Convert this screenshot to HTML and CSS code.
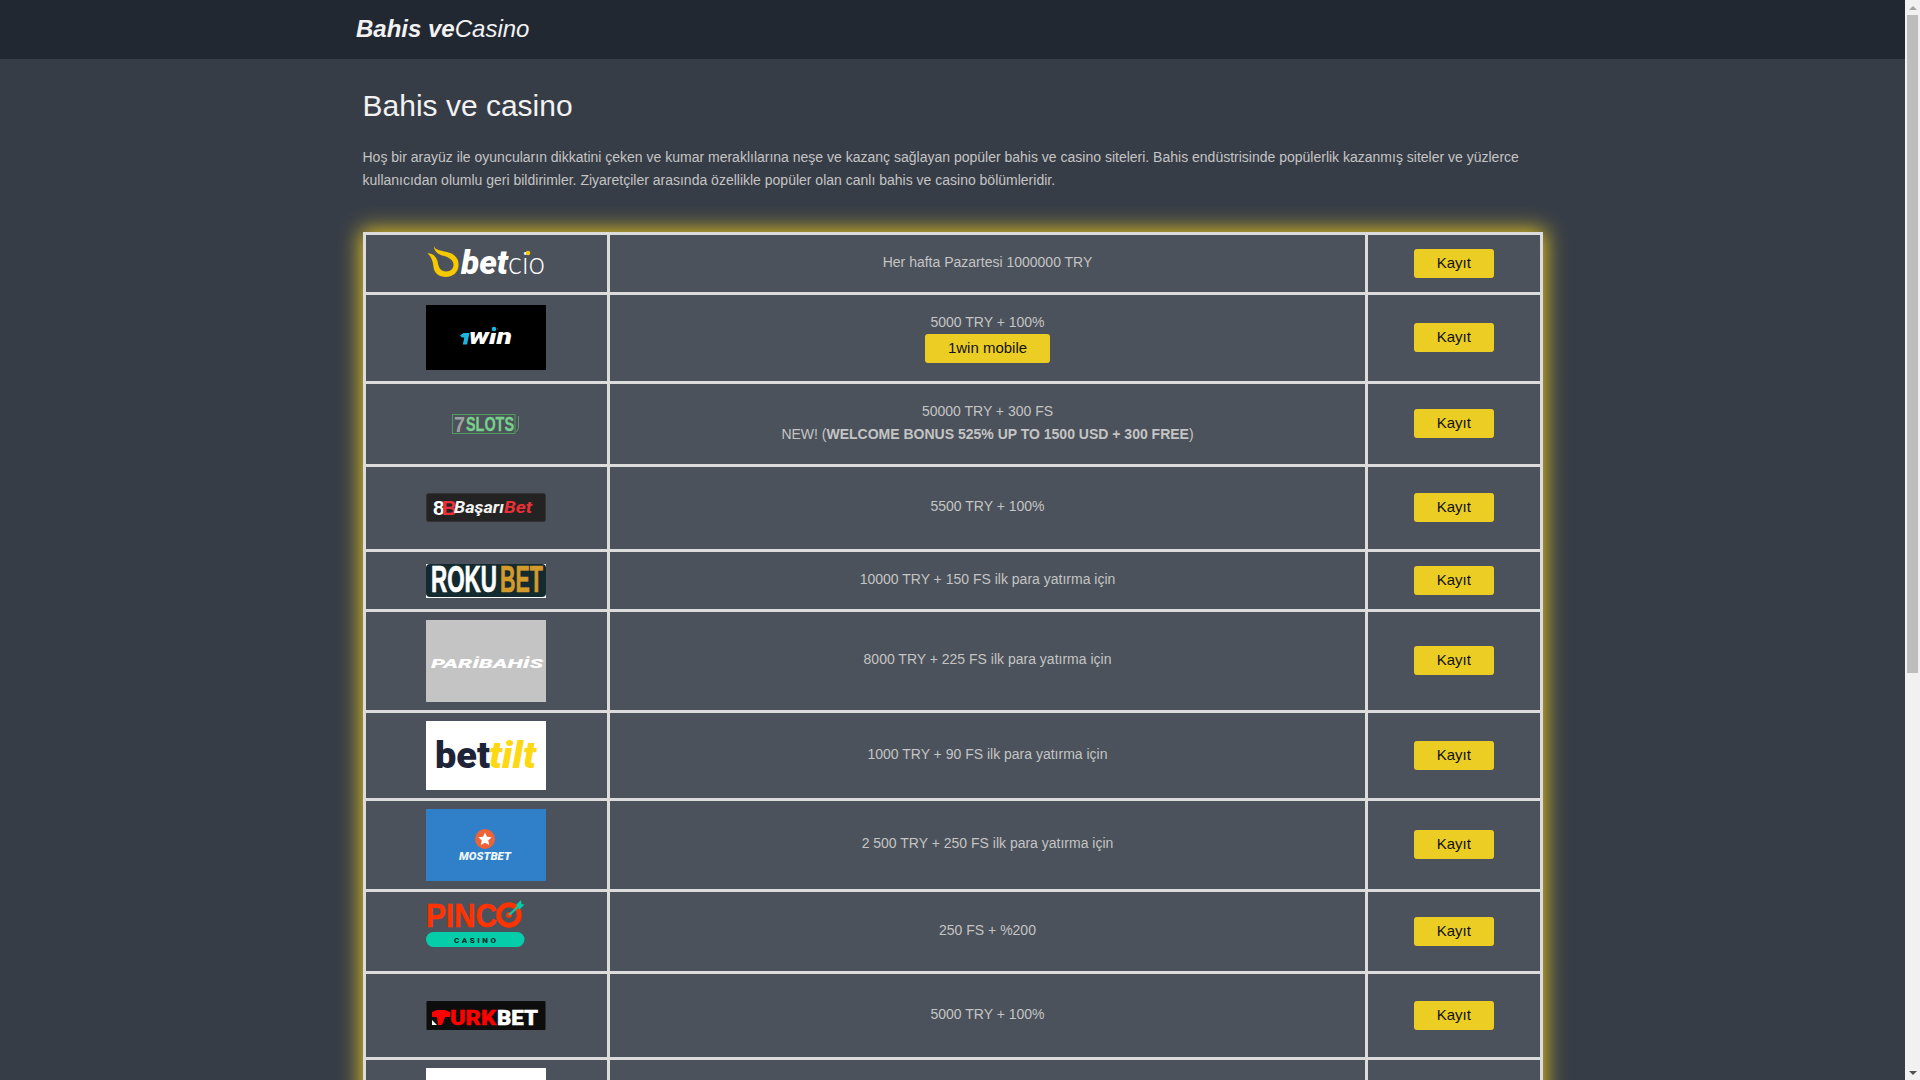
FILE: index.html
```html
<!DOCTYPE html>
<html lang="tr">
<head>
<meta charset="utf-8">
<title>Bahis ve Casino</title>
<link rel="stylesheet" href="styles.css">
</head>
<body>
<header class="topbar">
  <div class="topbar-inner"><a class="brand" href="#"><b>Bahis ve</b>Casino</a></div>
</header>
<main class="content">
  <h1 class="title">Bahis ve casino</h1>
  <p class="intro">Hoş bir arayüz ile oyuncuların dikkatini çeken ve kumar meraklılarına neşe ve kazanç sağlayan popüler bahis ve casino siteleri. Bahis endüstrisinde popülerlik kazanmış siteler ve yüzlerce kullanıcıdan olumlu geri bildirimler. Ziyaretçiler arasında özellikle popüler olan canlı bahis ve casino bölümleridir.</p>
  <table class="offers">
    <colgroup><col class="col-logo"><col class="col-text"><col class="col-action"></colgroup>
    <tbody>
      <tr>
        <td><svg class="logo" width="120" height="41" viewBox="0 0 120 41" role="img" aria-label="betcio">
          <path fill="#f5c800" d="M8 2.7C9 8 16 7 24 10C31 12.500 33 18 32.500 23C32 30 26 34 20 34C13 34 8 30 7.500 24C7 18 5 13 1.300 10.300C6 10 10 13 11.500 18C12.500 25 15 28.500 20 28.500C25 28.500 27.500 25 27.500 22C27.500 17 23 14.500 18 13C12 11.500 7.500 8 8 2.700Z"/>
          <text x="35" y="31" class="l-betcio-b" textLength="47" lengthAdjust="spacingAndGlyphs">bet</text>
          <text x="82" y="31" class="l-betcio-c" textLength="37" lengthAdjust="spacingAndGlyphs">cio</text>
          <circle cx="102" cy="10" r="2.300" fill="#f5c800"/>
        </svg></td>
        <td><p class="bonus">Her hafta Pazartesi 1000000 TRY</p></td>
        <td><a class="btn" href="#">Kayıt</a></td>
      </tr>
      <tr>
        <td><svg class="logo" width="120" height="70" viewBox="0 0 120 70" role="img" aria-label="1win">
          <rect y="2" width="120" height="65" fill="#000"/>
          <path fill="#1bb6dd" d="M34 32.500L37.500 30H43.500L41 41.500H36.800L38.300 34.500H36z"/>
          <text x="43" y="41" class="l-1win" textLength="43" lengthAdjust="spacingAndGlyphs">win</text>
          <rect x="65" y="24" width="6" height="6" fill="#000"/>
          <circle cx="68" cy="26" r="2.300" fill="#1bb6dd"/>
        </svg></td>
        <td><p class="bonus">5000 TRY + 100%</p><a class="btn btn-wide" href="#">1win mobile</a></td>
        <td><a class="btn" href="#">Kayıt</a></td>
      </tr>
      <tr>
        <td><svg class="logo" width="120" height="64" viewBox="0 0 120 64" role="img" aria-label="7slots">
          <rect x="26.500" y="22.500" width="62.500" height="19" fill="none" stroke="#4f9b62"/>
          <text x="28" y="39.500" class="l-7" textLength="11" lengthAdjust="spacingAndGlyphs">7</text>
          <text x="40" y="39" class="l-slots" textLength="48" lengthAdjust="spacingAndGlyphs">SLOTS</text>
          <path d="M92.500 24v12l-2 4" fill="none" stroke="#6b8f73"/>
        </svg></td>
        <td><p class="bonus">50000 TRY + 300 FS<br>NEW! (<b>WELCOME BONUS 525% UP TO 1500 USD + 300 FREE</b>)</p></td>
        <td><a class="btn" href="#">Kayıt</a></td>
      </tr>
      <tr>
        <td><svg class="logo" width="120" height="66" viewBox="0 0 120 66" role="img" aria-label="BaşarıBet">
          <rect x="0.500" y="18.500" width="119" height="28" rx="2" fill="#232323" stroke="#333"/>
          <text x="7" y="39.500" class="l-bb-mark"><tspan class="l-bb-w">8</tspan><tspan class="l-bb-r" dx="-3">B</tspan></text>
          <text x="28" y="38" class="l-bb-t" textLength="50" lengthAdjust="spacingAndGlyphs">Başarı</text>
          <text x="78" y="38" class="l-bb-b" textLength="28" lengthAdjust="spacingAndGlyphs">Bet</text>
        </svg></td>
        <td><p class="bonus">5500 TRY + 100%</p></td>
        <td><a class="btn" href="#">Kayıt</a></td>
      </tr>
      <tr>
        <td><svg class="logo" width="120" height="41" viewBox="0 0 120 41" role="img" aria-label="Rokubet">
          <rect y="4" width="120" height="34" fill="#fff"/>
          <rect y="4" width="120" height="33" rx="4" fill="#132a2f"/>
          <text x="5" y="32" class="l-roku-w" textLength="66" lengthAdjust="spacingAndGlyphs">ROKU</text>
          <text x="74" y="32" class="l-roku-g" textLength="43" lengthAdjust="spacingAndGlyphs">BET</text>
        </svg></td>
        <td><p class="bonus">10000 TRY + 150 FS ilk para yatırma için</p></td>
        <td><a class="btn" href="#">Kayıt</a></td>
      </tr>
      <tr>
        <td><svg class="logo" width="120" height="82" viewBox="0 0 120 82" role="img" aria-label="Paribahis">
          <rect width="120" height="82" fill="#c4c4c4"/>
          <text x="5" y="47.500" class="l-pari" textLength="112" lengthAdjust="spacingAndGlyphs">PARİBAHİS</text>
        </svg></td>
        <td><p class="bonus">8000 TRY + 225 FS ilk para yatırma için</p></td>
        <td><a class="btn" href="#">Kayıt</a></td>
      </tr>
      <tr>
        <td><svg class="logo" width="120" height="69" viewBox="0 0 120 69" role="img" aria-label="bettilt">
          <rect width="120" height="69" fill="#fff"/>
          <text x="9" y="47" class="l-bt-a" textLength="55" lengthAdjust="spacingAndGlyphs">bet</text>
          <text x="63" y="47" class="l-bt-b" textLength="47" lengthAdjust="spacingAndGlyphs">tilt</text>
        </svg></td>
        <td><p class="bonus">1000 TRY + 90 FS ilk para yatırma için</p></td>
        <td><a class="btn" href="#">Kayıt</a></td>
      </tr>
      <tr>
        <td><svg class="logo" width="120" height="72" viewBox="0 0 120 72" role="img" aria-label="Mostbet">
          <rect width="120" height="72" fill="#2f80c8"/>
          <circle cx="59" cy="30" r="10" fill="#ee6238"/>
          <path fill="#fff" d="M59 23.500l2 4.300 4.700.500-3.500 3.200 1 4.600-4.200-2.400-4.200 2.400 1-4.600-3.500-3.200 4.700-.500z"/>
          <text x="33" y="50.500" class="l-most" textLength="52" lengthAdjust="spacingAndGlyphs">MOSTBET</text>
        </svg></td>
        <td><p class="bonus">2 500 TRY + 250 FS ilk para yatırma için</p></td>
        <td><a class="btn" href="#">Kayıt</a></td>
      </tr>
      <tr>
        <td><svg class="logo" width="120" height="63" viewBox="0 0 120 63" role="img" aria-label="Pinco Casino">
          <text x="0" y="27" class="l-pinco" textLength="71" lengthAdjust="spacingAndGlyphs">PINC</text>
          <circle cx="83" cy="15" r="10.300" fill="none" stroke="#ff3300" stroke-width="5"/>
          <circle cx="83" cy="15" r="3" fill="#ff3300"/>
          <path d="M83 15L94 5" stroke="#06cda9" stroke-width="2.200"/>
          <path fill="#06cda9" d="M90 5l5-5 .5 4 3 .5-5 5z"/>
          <rect y="32" width="98.500" height="15" rx="7.500" fill="#06cda9"/>
          <text x="28" y="42.500" class="l-casino" textLength="42">CASINO</text>
        </svg></td>
        <td><p class="bonus">250 FS + %200</p></td>
        <td><a class="btn" href="#">Kayıt</a></td>
      </tr>
      <tr>
        <td><svg class="logo" width="120" height="67" viewBox="0 0 120 67" role="img" aria-label="Turkbet">
          <rect x="0.500" y="19" width="119" height="29" rx="1" fill="#0d0d0d"/>
          <path fill="#f00" d="M6 30l5-2h8l5 2v5h-5l-3 8h-4l-1-8H6z"/>
          <path fill="#fff" d="M6 38l5 5H6z"/>
          <text x="24" y="43" class="l-turk" textLength="46" lengthAdjust="spacingAndGlyphs">URK</text>
          <text x="71" y="43" class="l-bet" textLength="41" lengthAdjust="spacingAndGlyphs">BET</text>
        </svg></td>
        <td><p class="bonus">5000 TRY + 100%</p></td>
        <td><a class="btn" href="#">Kayıt</a></td>
      </tr>
      <tr>
        <td><svg class="logo" width="120" height="66" viewBox="0 0 120 66"><rect width="120" height="66" fill="#fff"/></svg></td>
        <td><p class="bonus">5000 TRY + 100%</p></td>
        <td><a class="btn" href="#">Kayıt</a></td>
      </tr>
    </tbody>
  </table>
</main>
<aside class="fake-scrollbar" aria-hidden="true">
  <span class="sb-arrow"><i class="sb-up"></i></span>
  <span class="sb-track"><i class="sb-thumb"></i></span>
  <span class="sb-arrow"><i class="sb-down"></i></span>
</aside>
</body>
</html>
```
FILE: styles.css
```css
* { box-sizing: border-box; }
html { margin: 0; padding: 0; }
body {
  margin: 0 15px 0 0;
  padding: 0;
  background: #373d47;
  color: #c4c4c4;
  font-family: "Liberation Sans", Arial, sans-serif;
  font-size: 14px;
  line-height: 23px;
}
.topbar { background: #212832; height: 59px; }
.topbar-inner {
  width: 1193px;
  margin: 0 auto;
  height: 59px;
  padding-bottom: 2px;
  display: flex;
  align-items: center;
}
.brand {
  color: #f2f2f2;
  font-size: 24px;
  font-style: italic;
  line-height: 1;
  text-decoration: none;
}
.brand b { font-weight: 700; }
.content { width: 1180px; margin: 0 auto; padding: 27px 0 62px; }
.title {
  margin: 0;
  color: #f2f2f2;
  font-size: 30px;
  font-weight: 400;
  line-height: 40px;
}
.intro { margin: 20px 0 0; }
.offers {
  width: 1177px;
  margin-top: 40px;
  border-collapse: collapse;
  table-layout: fixed;
  box-shadow: 0 0 20px 2px #e6c520;
}
.col-logo { width: 244.500px; }
.col-text { width: 758px; }
.col-action { width: 174.500px; }
.offers td {
  border: 3px solid #dcdcdc;
  background: #4b525b;
  padding: 8px 0;
  text-align: center;
  vertical-align: middle;
}
.logo { display: block; margin: 0 auto; }
.bonus { margin: 0 0 3px; }
.bonus b { font-weight: 700; }
.btn {
  display: block;
  width: 80px;
  height: 29px;
  margin: 0 auto 1px;
  background: #eccd24;
  border-radius: 3px;
  color: #111;
  font-size: 15px;
  line-height: 28px;
  text-align: center;
  text-decoration: none;
}
.btn-wide { width: 125px; margin: -3px auto 2px; }

.fake-scrollbar {
  position: fixed;
  top: 0;
  right: 0;
  bottom: 0;
  width: 15px;
  background: #f1f1f1;
  display: flex;
  flex-direction: column;
}
.sb-arrow {
  flex: 0 0 15px;
  display: flex;
  align-items: center;
  justify-content: center;
}
.sb-track { flex: 1; display: block; }
.sb-thumb { display: block; height: 658px; margin: 0 2px; background: #bdbdbd; }
.sb-up, .sb-down {
  width: 0;
  height: 0;
  border-left: 4px solid transparent;
  border-right: 4px solid transparent;
}
.sb-up { border-bottom: 4px solid #a3a3a3; }
.sb-down { border-top: 4px solid #505050; }

.l-betcio-b { font: italic 900 34px "Roboto", sans-serif; fill: #fff; }
.l-betcio-c { font: 300 32px "Lato", sans-serif; fill: #fff; }
.l-1win { font: italic 900 22px "Roboto", sans-serif; fill: #fff; }
.l-7 { font: 700 22px "Liberation Sans", sans-serif; fill: #a0a0a0; }
.l-slots { font: 700 20px "Liberation Sans", sans-serif; fill: #78d08a; stroke: #78d08a; stroke-width: .3px; }
.l-bb-mark { font: 700 21px "Liberation Sans", sans-serif; }
.l-bb-w { fill: #fff; }
.l-bb-r { fill: #ea3038; }
.l-bb-t { font: italic 700 16px "Roboto", sans-serif; fill: #f2f2f2; }
.l-bb-b { font: italic 700 16px "Roboto", sans-serif; fill: #ea3038; }
.l-roku-w { font: 700 36px "Liberation Sans", sans-serif; fill: #fff; stroke: #fff; stroke-width: .7px; }
.l-roku-g { font: 700 36px "Liberation Sans", sans-serif; fill: #d59a2c; stroke: #d59a2c; stroke-width: .7px; }
.l-pari { font: italic 900 12px "Roboto", sans-serif; fill: #fff; }
.l-bt-a { font: 900 36px "Roboto", sans-serif; fill: #1e2438; }
.l-bt-b { font: italic 900 36px "Roboto", sans-serif; fill: #ffd814; }
.l-most { font: italic 900 10px "Roboto", sans-serif; fill: #eef5fb; }
.l-pinco { font: 700 33px "Liberation Sans", sans-serif; fill: #ff3300; stroke: #ff3300; stroke-width: .5px; }
.l-casino { font: 900 8px "Roboto", sans-serif; fill: #0c2b2a; }
.l-turk { font: 900 20px "Roboto", sans-serif; fill: #f00; stroke: #f00; stroke-width: .4px; }
.l-bet { font: 900 20px "Roboto", sans-serif; fill: #fff; stroke: #fff; stroke-width: .4px; }
```
